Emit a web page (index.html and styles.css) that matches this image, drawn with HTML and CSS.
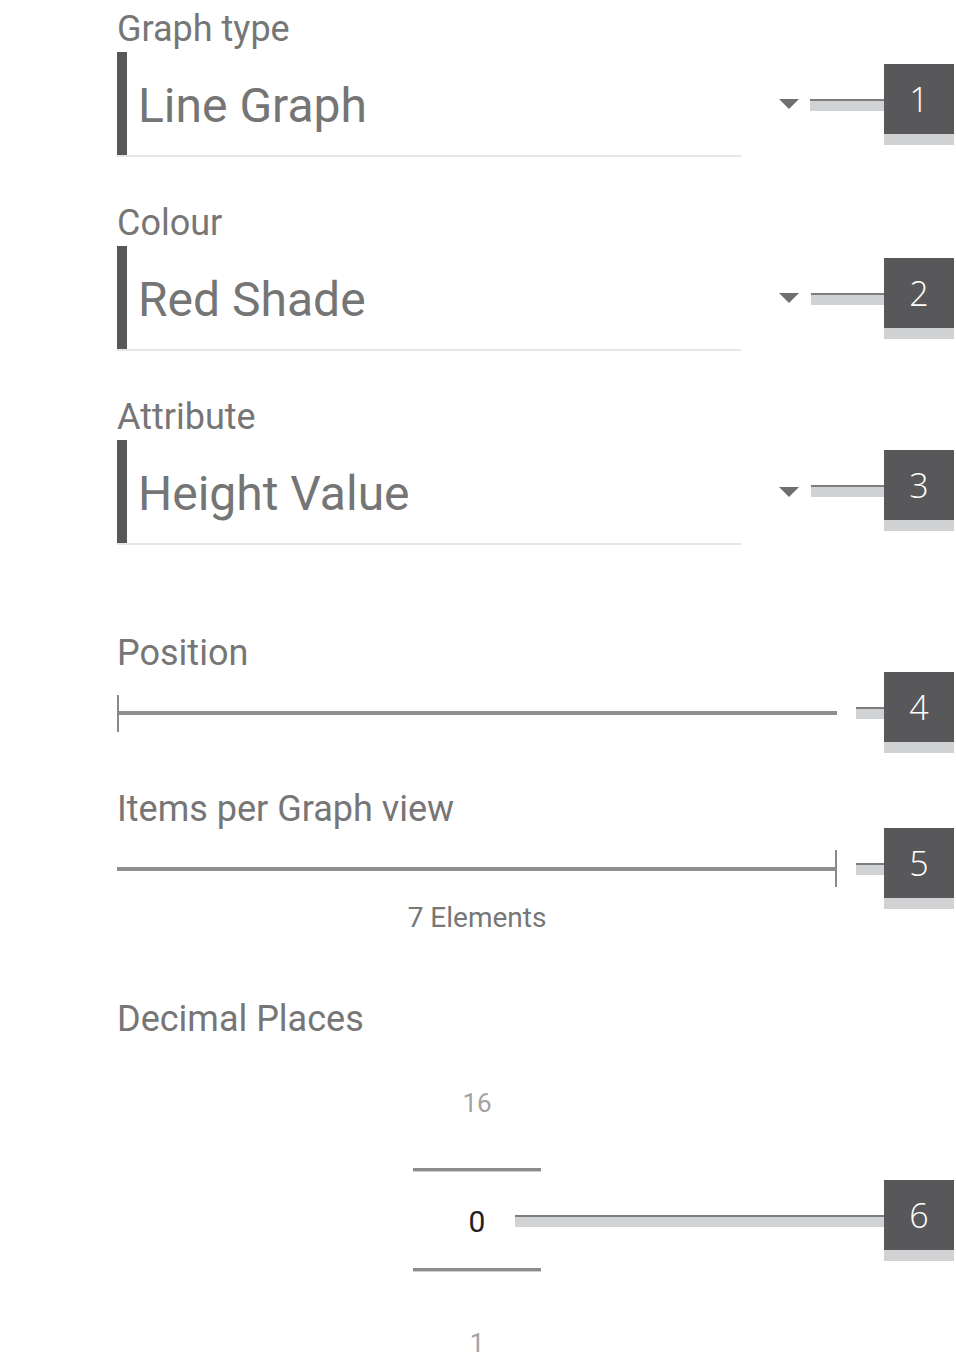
FILE: index.html
```html
<!DOCTYPE html>
<html>
<head>
<meta charset="utf-8">
<link rel="stylesheet" href="styles.css">
</head>
<body>
<div class="page">
  <section class="field">
    <div class="label">Graph type</div>
    <div class="spinner">
      <span class="spinner-bar"></span>
      <span class="spinner-value">Line Graph</span>
      <span class="spinner-arrow"></span>
    </div>
    <div class="underline"></div>
  </section>
  <section class="field">
    <div class="label">Colour</div>
    <div class="spinner">
      <span class="spinner-bar"></span>
      <span class="spinner-value">Red Shade</span>
      <span class="spinner-arrow"></span>
    </div>
    <div class="underline"></div>
  </section>
  <section class="field">
    <div class="label">Attribute</div>
    <div class="spinner">
      <span class="spinner-bar"></span>
      <span class="spinner-value">Height Value</span>
      <span class="spinner-arrow"></span>
    </div>
    <div class="underline"></div>
  </section>

  <section class="slider-field slider-position">
    <div class="label">Position</div>
    <div class="slider"><span class="thumb thumb-start"></span></div>
  </section>

  <section class="slider-field slider-items">
    <div class="label">Items per Graph view</div>
    <div class="slider"><span class="thumb thumb-end"></span></div>
    <div class="slider-caption">7 Elements</div>
  </section>

  <section class="picker-field">
    <div class="label">Decimal Places</div>
    <div class="picker">
      <div class="picker-item prev">16</div>
      <div class="picker-divider"></div>
      <div class="picker-item current">0</div>
      <div class="picker-divider"></div>
      <div class="picker-item next">1</div>
    </div>
  </section>

  <div class="callout c1"><span class="connector"></span><span class="badge"><span class="badge-num">1</span><span class="badge-foot"></span></span></div>
  <div class="callout c2"><span class="connector"></span><span class="badge"><span class="badge-num">2</span><span class="badge-foot"></span></span></div>
  <div class="callout c3"><span class="connector"></span><span class="badge"><span class="badge-num">3</span><span class="badge-foot"></span></span></div>
  <div class="callout c4"><span class="connector"></span><span class="badge"><span class="badge-num">4</span><span class="badge-foot"></span></span></div>
  <div class="callout c5"><span class="connector"></span><span class="badge"><span class="badge-num">5</span><span class="badge-foot"></span></span></div>
  <div class="callout c6"><span class="connector"></span><span class="badge"><span class="badge-num">6</span><span class="badge-foot"></span></span></div>
</div>
</body>
</html>
```

FILE: styles.css
```css
* { box-sizing: border-box; }
html, body { margin: 0; padding: 0; background: #ffffff; }
body { font-family: Roboto, "Liberation Sans", sans-serif; }

.page {
  position: relative;
  display: flex;
  flex-direction: column;
  align-items: flex-start;
  width: 956px;
  height: 1370px;
  padding-left: 117px;
  padding-top: 8px;
  overflow: hidden;
}

.label {
  font-size: 36px;
  line-height: 42px;
  color: #767676;
  white-space: nowrap;
}

/* Spinner fields */
.field + .field { margin-top: 45px; }
.field .label { margin-bottom: 2px; }

.spinner {
  display: flex;
  align-items: center;
  width: 682px;
  height: 103px;
}
.spinner-bar {
  align-self: stretch;
  width: 10px;
  background: #575759;
}
.spinner-value {
  padding-top: 4px;
  margin-left: 11px;
  font-size: 48px;
  line-height: 56px;
  color: #757575;
  white-space: nowrap;
}
.spinner-arrow {
  margin-left: auto;
  width: 0;
  height: 0;
  border-left: 10px solid transparent;
  border-right: 10px solid transparent;
  border-top: 10px solid #6f6f6f;
  margin-top: 1px;
}
.underline {
  width: 624px;
  height: 2px;
  background: #e6e6e6;
}

/* Sliders */
.slider-field { width: 720px; }
.slider-position { margin-top: 87px; }
.slider-items { margin-top: 73px; }
.slider {
  position: relative;
  margin-top: 37px;
  height: 4px;
  width: 720px;
  background: #8f8f8f;
}
.thumb {
  position: absolute;
  top: -16px;
  width: 2px;
  height: 37px;
  background: #8a8a8a;
}
.thumb-start { left: 0; }
.thumb-end { left: 718px; top: -17px; }
.slider-caption {
  margin-top: 31px;
  text-align: center;
  font-size: 28px;
  line-height: 32px;
  color: #777777;
}

/* Number picker */
.picker-field { width: 720px; margin-top: 64px; }
.picker {
  width: 128px;
  margin: 47px auto 0;
  text-align: center;
}
.picker-item { color: #a3a3a3; }
.picker-item.prev { font-size: 26px; line-height: 32px; margin-bottom: 49px; }
.picker-item.current { font-size: 30px; line-height: 36px; color: #1f1f1f; margin: 32px 0 28px; }
.picker-item.next { font-size: 26px; line-height: 32px; margin-top: 55px; }
.picker-divider {
  height: 4px;
  border-top: 3px solid #8c8c8c;
  border-bottom: 1px solid #cfcfcf;
}

/* Callouts (annotation overlay) */
.callout {
  position: absolute;
  right: 2px;
  display: flex;
  align-items: flex-start;
}
.connector {
  flex: 1;
  margin-top: 35px;
  height: 12px;
  border-top: 2px solid #7d7d7f;
  background: #d1d2d4;
}
.badge {
  display: flex;
  flex-direction: column;
  width: 70px;
}
.badge-num {
  height: 70px;
  background: #58585a;
  color: #ffffff;
  font-family: "Open Sans", "DejaVu Sans", sans-serif;
  font-weight: 300;
  font-size: 34px;
  line-height: 70px;
  text-align: center;
}
.badge-foot {
  height: 11px;
  background: #d1d2d4;
}
.c1 { top: 64px; left: 810px; }
.c2 { top: 258px; left: 811px; }
.c3 { top: 450px; left: 811px; }
.c4 { top: 672px; left: 856px; }
.c5 { top: 828px; left: 856px; }
.c6 { top: 1180px; left: 515px; }
```
